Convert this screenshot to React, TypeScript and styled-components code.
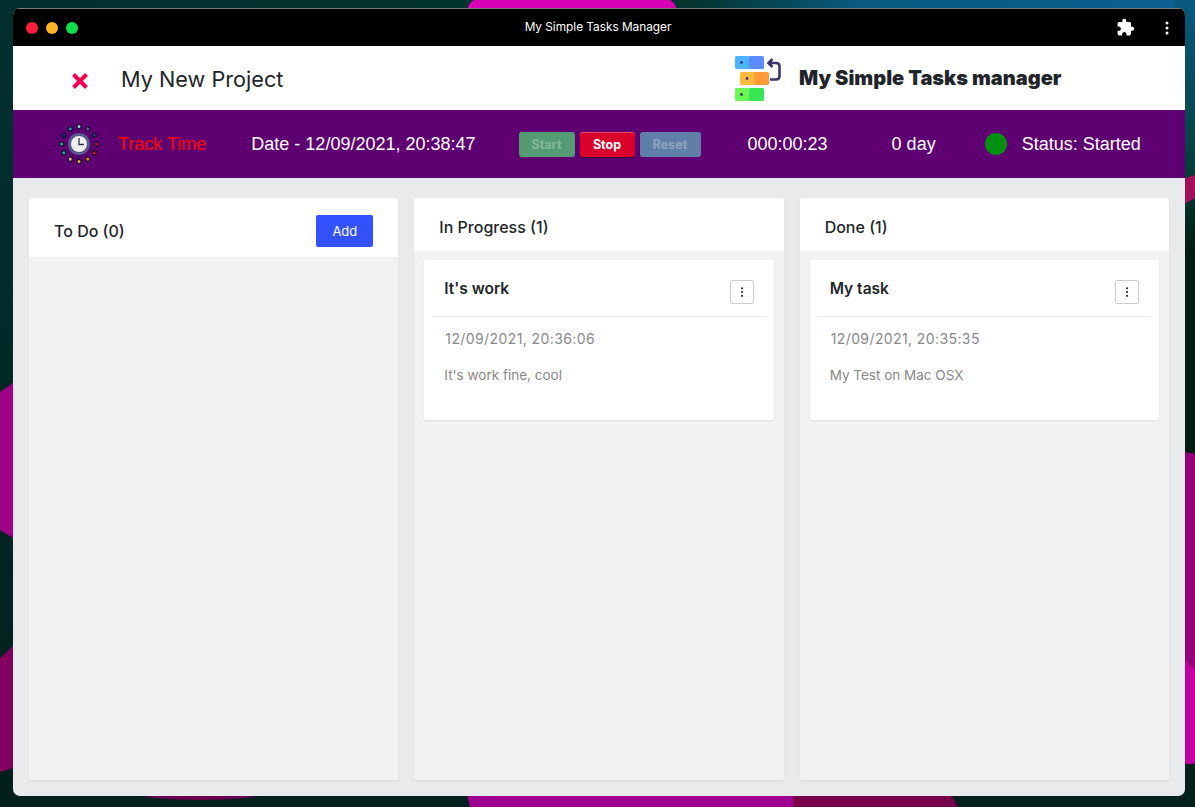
import styled, { createGlobalStyle } from 'styled-components';
import { MdExtension } from 'react-icons/md';

const GlobalStyle = createGlobalStyle`
  html, body {
    margin: 0;
    padding: 0;
    background: #02201c;
  }
`;

const Desktop = styled.div`
  position: relative;
  width: 1195px;
  height: 807px;
  overflow: hidden;
  box-sizing: border-box;
  padding: 8px 10px 11px 13px;
  font-family: Inter, 'Liberation Sans', sans-serif;
`;

const Wallpaper = styled.svg`
  position: absolute;
  top: 0;
  left: 0;
`;

const Window = styled.div`
  position: relative;
  height: 100%;
  display: flex;
  flex-direction: column;
  border-radius: 7px;
  overflow: hidden;
  background: #e9eaec;
`;

const TitleBar = styled.div`
  height: 38px;
  flex: none;
  box-sizing: border-box;
  border-top: 1px solid #77807f;
  background: #000;
  display: flex;
  align-items: center;
  justify-content: space-between;
  padding: 0 10px 0 13px;
  color: #fff;
  font-size: 11.8px;
`;

const Lights = styled.div`
  display: flex;
  gap: 8px;
`;

const Light = styled.span<{ $color: string }>`
  width: 12px;
  height: 12px;
  border-radius: 50%;
  background: ${(props) => props.$color};
`;

const WindowTitle = styled.div`
  position: absolute;
  left: 0;
  right: 2px;
  top: 11px;
  text-align: center;
  line-height: 16px;
  pointer-events: none;
`;

const BarIcons = styled.div`
  display: flex;
  align-items: center;
  gap: 24px;
`;

const Header = styled.header`
  height: 64px;
  flex: none;
  box-sizing: border-box;
  padding: 2px 0 0 58px;
  background: #fff;
  display: flex;
  align-items: center;
`;

const CloseWrap = styled.span`
  display: flex;
  margin-top: 4px;
`;

const ProjectTitle = styled.h1`
  margin: 0 0 0 32px;
  width: 614px;
  font-size: 21.7px;
  font-weight: 400;
  color: #212529;
`;

const Brand = styled.div`
  margin: 0 0 2px 18px;
  font-size: 20px;
  font-weight: 900;
  color: #212529;
`;

const TrackBar = styled.section`
  height: 68px;
  flex: none;
  background: #5f0072;
  display: flex;
  align-items: center;
  padding-left: 46px;
  color: #fff;
  font-family: 'Liberation Sans', Arial, sans-serif;
  font-size: 18px;
`;

const TrackItem = styled.span<{ $left: number; $color?: string }>`
  margin-left: ${(props) => props.$left}px;
  color: ${(props) => props.$color || '#fff'};
  white-space: nowrap;
`;

const Buttons = styled.div`
  margin-left: 43px;
  display: flex;
  gap: 5px;
`;

const TimerButton = styled.button<{ $bg: string; $width: number; $active?: boolean }>`
  width: ${(props) => props.$width}px;
  height: 25px;
  padding: 0;
  border: 0;
  border-radius: 3px;
  background: ${(props) => props.$bg};
  color: ${(props) => (props.$active ? '#fff' : 'rgba(255, 255, 255, 0.3)')};
  font-family: Inter, 'Liberation Sans', sans-serif;
  font-size: 12.5px;
  font-weight: 700;
  box-shadow: ${(props) => (props.$active ? 'inset 0 1px 0 #f04060, 0 1px 2px #30003c' : 'none')};
`;

const StatusDot = styled.span`
  margin-left: 49px;
  width: 22px;
  height: 22px;
  border-radius: 50%;
  background: #008f11;
`;

const Board = styled.main`
  flex: 1;
  min-height: 0;
  display: grid;
  grid-template-columns: repeat(3, 1fr);
  gap: 16px;
  padding: 20px 16px 16px;
`;

const Column = styled.div`
  background: #f2f2f2;
  border-radius: 2px;
  box-shadow: 0 1px 2px rgba(0, 0, 0, 0.08);
  display: flex;
  flex-direction: column;
`;

const ColumnHeader = styled.div<{ $tall?: boolean }>`
  height: ${(props) => (props.$tall ? 59 : 53)}px;
  box-sizing: border-box;
  background: #fff;
  display: flex;
  align-items: center;
  justify-content: space-between;
  padding: ${(props) => (props.$tall ? '7px 25px 0' : '5px 25px 0')};
  border-radius: 2px 2px 0 0;
  font-size: 16px;
  font-weight: 500;
  color: #212529;
`;

const AddButton = styled.button`
  width: 57px;
  height: 32px;
  margin-top: -1px;
  padding: 0;
  border: 0;
  border-radius: 2px;
  background: #3451ff;
  color: #fff;
  font-family: inherit;
  font-size: 13px;
`;

const Card = styled.article`
  margin: 9px 10px 0;
  height: 160px;
  box-sizing: border-box;
  background: #fff;
  border-radius: 2px;
  box-shadow: 0 1px 2px rgba(0, 0, 0, 0.08);
  padding: 0 8px;
`;

const CardTop = styled.div`
  height: 57px;
  box-sizing: border-box;
  border-bottom: 1px solid #e8e8e8;
  display: flex;
  justify-content: space-between;
  padding: 20px 12px 0 12px;
`;

const CardTitle = styled.h3`
  margin: 1px 0 0;
  font-size: 15.5px;
  line-height: 16px;
  font-weight: 600;
  color: #212529;
`;

const MenuButton = styled.button`
  width: 24px;
  height: 24px;
  padding: 0;
  border: 1px solid #ccc;
  border-radius: 2px;
  background: #fff;
  display: flex;
  align-items: center;
  justify-content: center;
`;

const CardDate = styled.div`
  margin: 13px 0 0 13px;
  font-size: 14px;
  line-height: 17px;
  letter-spacing: 0.4px;
  color: #888;
`;

const CardText = styled.p`
  margin: 20px 0 0 12px;
  font-size: 13.5px;
  line-height: 17px;
  color: #888;
`;

const Wave = () => (
  <Wallpaper width="1195" height="807" viewBox="0 0 1195 807">
    <defs>
      <linearGradient id="base" x1="0" x2="1" y1="0" y2="0">
        <stop offset="0" stopColor="#03302f" />
        <stop offset="0.58" stopColor="#03342f" />
        <stop offset="0.72" stopColor="#0a5a80" />
        <stop offset="1" stopColor="#0a6090" />
      </linearGradient>
      <linearGradient id="low" x1="0" x2="0" y1="0" y2="1">
        <stop offset="0" stopColor="#0a5a80" />
        <stop offset="0.35" stopColor="#06403c" />
        <stop offset="0.55" stopColor="#021c12" />
      </linearGradient>
      <linearGradient id="side" x1="0" x2="0" y1="0" y2="1">
        <stop offset="0" stopColor="#03302f" />
        <stop offset="1" stopColor="#021f1c" />
      </linearGradient>
    </defs>
    <rect width="1195" height="807" fill="#02201c" />
    <rect width="1195" height="20" fill="url(#base)" />
    <rect y="20" width="13" height="787" fill="url(#side)" />
    <rect x="1175" width="20" height="460" fill="url(#low)" />
    <polygon points="0,392 13,383 13,538 0,530" fill="#a00088" />
    <polygon points="0,658 13,646 13,768 0,772" fill="#82005e" />
    <polygon points="1185,178 1195,175 1195,198 1185,204" fill="#a0105a" />
    <polygon points="1185,452 1195,454 1195,807 1185,807" fill="#92007a" />
    <polygon points="1185,660 1195,670 1195,762 1185,766" fill="#c000a0" />
    <rect x="1185" y="764" width="10" height="43" fill="#03201c" />
    <ellipse cx="572" cy="8" rx="104" ry="24" fill="#d800b4" />
    <polygon points="466,790 793,790 793,807 470,807" fill="#a00090" />
    <polygon points="793,790 948,790 958,807 793,807" fill="#780048" />
    <ellipse cx="200" cy="794" rx="60" ry="6" fill="#6a0050" />
  </Wallpaper>
);

const ClockIcon = () => {
  const colors = ['#8ecfd8', '#6a5aa8', '#3a2a98', '#d00040', '#e01020', '#f08010', '#e0b020', '#d8c080', '#10b890', '#10b890', '#202890', '#1098b8'];
  return (
    <svg width="40" height="40" viewBox="0 0 40 40">
      {colors.map((c, i) => {
        const a = (i / 12) * Math.PI * 2 - Math.PI / 2;
        return (
          <g key={c + i}>
            <line x1="20" y1="20" x2={20 + 17 * Math.cos(a)} y2={20 + 17 * Math.sin(a)} stroke="#2a1a50" strokeWidth="0.8" />
            <circle cx={20 + 17.5 * Math.cos(a)} cy={20 + 17.5 * Math.sin(a)} r="2.1" fill={c} stroke="#14062a" strokeWidth="1.1" />
          </g>
        );
      })}
      <circle cx="20" cy="20" r="11" fill="#5a5a98" />
      <circle cx="20" cy="20" r="8.5" fill="#f0f0ee" stroke="#3a3a60" strokeWidth="0.8" />
      <path d="M20 14 V20.5 H25" fill="none" stroke="#303050" strokeWidth="1.3" />
    </svg>
  );
};

const LogoIcon = () => (
  <svg width="46" height="46" viewBox="0 0 46 46">
    <rect x="0" y="0" width="15" height="13" rx="1.5" fill="#4ab4ff" />
    <rect x="14" y="0" width="15" height="13" rx="1.5" fill="#5a8cff" />
    <rect x="5" y="16" width="15" height="13" rx="1.5" fill="#ffbb3c" />
    <rect x="19" y="16" width="15" height="13" rx="1.5" fill="#ff9a36" />
    <rect x="0" y="32" width="15" height="13" rx="1.5" fill="#6cf752" />
    <rect x="14" y="32" width="15" height="13" rx="1.5" fill="#36e654" />
    <circle cx="6.5" cy="6.5" r="1.4" fill="#3a3a70" />
    <circle cx="12" cy="22.5" r="1.4" fill="#3a3a70" />
    <circle cx="6.5" cy="38.5" r="1.4" fill="#3a3a70" />
    <path d="M35 23.5 H41 Q44.5 23.5 44.5 20 V10 Q44.5 7 41 7 H34 M37.5 3 L33.5 7 L37.5 11" fill="none" stroke="#3a3568" strokeWidth="2.6" />
  </svg>
);

const CloseIcon = () => (
  <svg width="18" height="18" viewBox="0 0 18 18">
    <path d="M2.5 2.5 L15.5 15.5 M15.5 2.5 L2.5 15.5" stroke="#f5004f" strokeWidth="4" />
  </svg>
);

const Dots = ({ size, color }: { size: number; color: string }) => (
  <svg width={size} height={size} viewBox="0 0 16 16">
    <circle cx="8" cy="3" r="1.5" fill={color} />
    <circle cx="8" cy="8" r="1.5" fill={color} />
    <circle cx="8" cy="13" r="1.5" fill={color} />
  </svg>
);

const TaskCard = ({ title, date, text }: { title: string; date: string; text: string }) => (
  <Card>
    <CardTop>
      <CardTitle>{title}</CardTitle>
      <MenuButton>
        <Dots size={12} color="#333" />
      </MenuButton>
    </CardTop>
    <CardDate>{date}</CardDate>
    <CardText>{text}</CardText>
  </Card>
);

const App = () => {
  return (
    <Desktop>
      <GlobalStyle />
      <Wave />
      <Window>
        <TitleBar>
          <Lights>
            <Light $color="#ff1f3d" />
            <Light $color="#ffb326" />
            <Light $color="#0fdc4a" />
          </Lights>
          <WindowTitle>My Simple Tasks Manager</WindowTitle>
          <BarIcons>
            <MdExtension size={19} color="#fff" />
            <Dots size={16} color="#fff" />
          </BarIcons>
        </TitleBar>
        <Header>
          <CloseWrap>
            <CloseIcon />
          </CloseWrap>
          <ProjectTitle>My New Project</ProjectTitle>
          <LogoIcon />
          <Brand>My Simple Tasks manager</Brand>
        </Header>
        <TrackBar>
          <ClockIcon />
          <TrackItem $left={19} $color="#f00">Track Time</TrackItem>
          <TrackItem $left={45}>Date - 12/09/2021, 20:38:47</TrackItem>
          <Buttons>
            <TimerButton $bg="#549a73" $width={56}>Start</TimerButton>
            <TimerButton $bg="#d9002c" $width={55} $active>Stop</TimerButton>
            <TimerButton $bg="#5f7fa8" $width={61}>Reset</TimerButton>
          </Buttons>
          <TrackItem $left={47}>000:00:23</TrackItem>
          <TrackItem $left={64}>0 day</TrackItem>
          <StatusDot />
          <TrackItem $left={15}>Status: Started</TrackItem>
        </TrackBar>
        <Board>
          <Column>
            <ColumnHeader $tall>
              To Do (0)
              <AddButton>Add</AddButton>
            </ColumnHeader>
          </Column>
          <Column>
            <ColumnHeader>In Progress (1)</ColumnHeader>
            <TaskCard title="It's work" date="12/09/2021, 20:36:06" text="It's work fine, cool" />
          </Column>
          <Column>
            <ColumnHeader>Done (1)</ColumnHeader>
            <TaskCard title="My task" date="12/09/2021, 20:35:35" text="My Test on Mac OSX" />
          </Column>
        </Board>
      </Window>
    </Desktop>
  );
};

export default App;
